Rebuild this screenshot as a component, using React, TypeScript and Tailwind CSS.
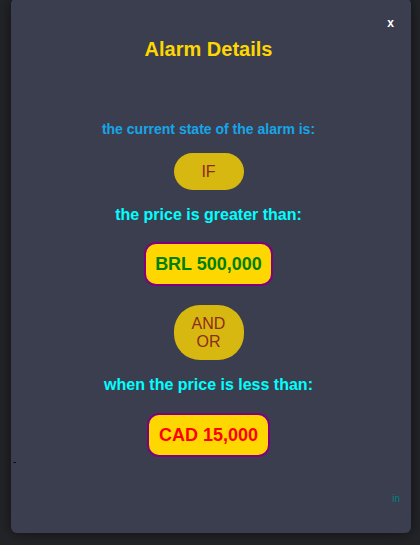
export default function App() {
    return (
        <div className="w-[420px] h-[545px] bg-[#232428] overflow-hidden pl-[11px] font-['Liberation_Sans',Arial,sans-serif]">
            <div className="relative w-[400px] h-[535px] -mt-[2px] rounded-md bg-[#3b3e4f] shadow-[0_0_14px_rgba(0,0,0,0.55)] pt-[40px] pr-[5px] flex flex-col items-center">
                <button className="absolute right-[17px] top-[18px] text-white text-[12px] font-bold leading-[14px]">x</button>

                <h2 className="text-[20px] leading-[23px] font-bold text-[#ffd700]">Alarm Details</h2>

                <p className="mt-[60px] text-[14px] leading-[16px] font-bold text-[#16a6e8]">the current state of the alarm is:</p>

                <div className="mt-[16px] w-[70px] py-[9.5px] rounded-[24px] bg-[#ffd700]/80 text-center text-[16px] leading-[18px] text-[#8e2b1c]">IF</div>

                <p className="mt-[16px] text-[16px] leading-[18px] font-bold text-[#00ffff]">the price is greater than:</p>

                <div className="mt-[18px] h-[44px] px-[9.5px] flex items-center border-2 border-[#800080] rounded-xl bg-[#ffd700] text-[18px] font-bold text-[#008000]">BRL 500,000</div>

                <div className="mt-[19px] w-[70px] py-[9.5px] rounded-[26px] bg-[#ffd700]/80 text-center text-[16px] leading-[18px] text-[#8e2b1c]">
                    AND
                    <br />
                    OR
                </div>

                <p className="mt-[16px] text-[16px] leading-[18px] font-bold text-[#00ffff]">when the price is less than:</p>

                <div className="mt-[19px] h-[44px] px-[9.5px] flex items-center border-2 border-[#800080] rounded-xl bg-[#ffd700] text-[18px] font-bold text-[#ff0000]">CAD 15,000</div>

                <p className="self-start ml-[2px] text-[10px] leading-[10px] text-black">-</p>

                <p className="self-end mr-[6px] mt-[27px] text-[10px] leading-[10px] text-[#008080]">in</p>
            </div>
        </div>
    )
}
